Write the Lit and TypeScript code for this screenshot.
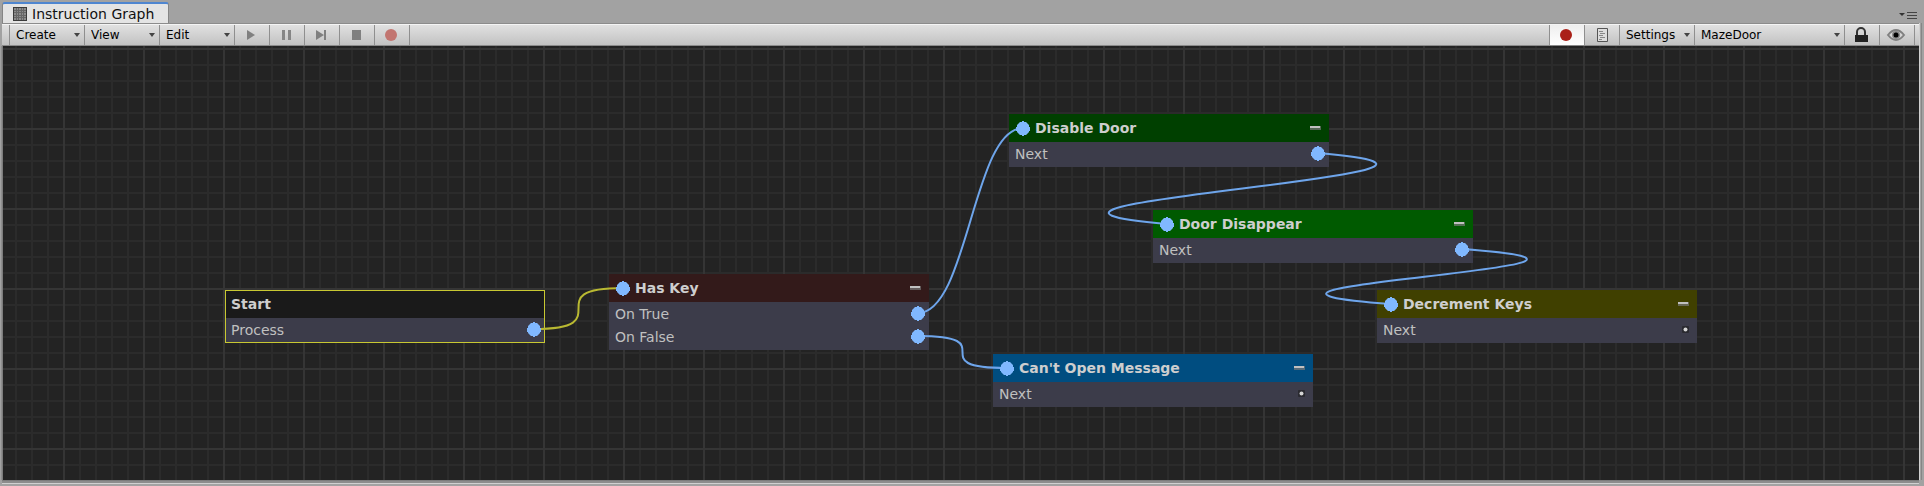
import { LitElement, html, svg, css } from "lit";
import { customElement } from "lit/decorators.js";
import { styleMap } from "lit/directives/style-map.js";

type Output = { label: string; to?: string; color?: string; reach?: number; sag?: number };
type GraphNode = { id: string; title: string; x: number; y: number; color: string; root?: boolean; outputs: Output[] };

const BLUE = "#80b8ff";

const NODES: GraphNode[] = [
  { id: "start", title: "Start", x: 222, y: 244, color: "#1a1a1a", root: true,
    outputs: [{ label: "Process", to: "key", color: "#b9b932", reach: 89 }] },
  { id: "key", title: "Has Key", x: 606, y: 228, color: "#331a1a",
    outputs: [{ label: "On True", to: "disable", reach: 50 }, { label: "On False", to: "message", reach: 89 }] },
  { id: "disable", title: "Disable Door", x: 1006, y: 68, color: "#004000",
    outputs: [{ label: "Next", to: "disappear", reach: 250, sag: 21 }] },
  { id: "disappear", title: "Door Disappear", x: 1150, y: 164, color: "#005a00",
    outputs: [{ label: "Next", to: "decrement", reach: 250, sag: 18 }] },
  { id: "decrement", title: "Decrement Keys", x: 1374, y: 244, color: "#404000", outputs: [{ label: "Next" }] },
  { id: "message", title: "Can't Open Message", x: 990, y: 308, color: "#004d80", outputs: [{ label: "Next" }] },
];

@customElement("graph-node")
export class GraphNodeElement extends LitElement {
  static properties = { node: { attribute: false } };
  declare node: GraphNode;

  static styles = css`
    :host { display: block; width: 320px; font: 14px/22px "DejaVu Sans", sans-serif; color: #c0c0c0; }
    .head { display: flex; align-items: center; height: 28px; padding: 0 8px 0 7px; }
    .title { flex: 1; margin: 0; font-size: 14px; font-weight: bold; color: #cecece; }
    .pin { position: relative; z-index: 1; width: 14px; height: 15px; margin-right: 5px; flex: none; }
    .fold { display: flex; padding: 4px 0; border: 0; background: none; }
    .body { display: flex; flex-direction: column; gap: 1px; margin: 0; padding: 1px 4px 2px 6px; list-style: none; background: #3c3c4a; }
    .row { display: flex; align-items: center; justify-content: space-between; height: 22px; }
    .row .pin { margin: 0 0 2px; }
    .root { outline: 1px solid #c8c832; outline-offset: -1px; }
    .root .head { padding-left: 6px; }
  `;

  private pin() {
    return html`<svg class="pin" viewBox="0 0 14 15"><path fill=${BLUE} d="M6 0h2v1h2l3 3v2h1v4h-1v1l-3 3H8v1H6v-1H4l-3-3v-1H0V6h1V4l3-3h2z"/></svg>`;
  }

  render() {
    const n = this.node;
    return html`<section class=${n.root ? "root" : ""}>
      <header class="head" style=${styleMap({ background: n.color })}>
        ${n.root ? "" : this.pin()}
        <h2 class="title">${n.title}</h2>
        ${n.root ? "" : html`<button class="fold" aria-label="Collapse">
          <svg width="12" height="4"><path fill="#777" opacity=".7" d="M1 0h11v4H1z"/><path fill="#c0c0c0" d="M1 0h10v2H1z"/></svg>
        </button>`}
      </header>
      <ul class="body">
        ${n.outputs.map((o) => html`<li class="row"><span>${o.label}</span>
          ${o.to ? this.pin() : html`<svg class="pin" viewBox="0 0 14 15"><rect x="3" y="4" width="7" height="7" rx="1" fill="#2a2a30"/><circle cx="6.500" cy="7.500" r="2" fill="#d4d4d4"/></svg>`}
        </li>`)}
      </ul>
    </section>`;
  }
}

@customElement("app-root")
export class AppRoot extends LitElement {
  static styles = css`
    :host { display: flex; flex-direction: column; box-sizing: border-box; height: 100vh; padding: 2px 5px 0 2px;
      background: #a2a2a2; font: 14px/20px "DejaVu Sans", sans-serif; color: #111; overflow: hidden; }
    .tabs { display: flex; justify-content: space-between; align-items: stretch; height: 21px; flex: none; }
    .tab { display: flex; align-items: center; gap: 5px; margin: 0; padding: 0 14px 0 10px; border: 1px solid #858585;
      border-width: 0 1px; border-top: 2px solid #4f86d0; border-radius: 3px 3px 0 0; background: #e4e4e4; font: inherit; color: #111; }
    .pane { display: flex; align-items: flex-end; border: 0; background: none; padding: 0 2px 4px 0; }
    .bar { display: flex; height: 21px; flex: none; padding-left: 7px; border-top: 1px solid #8c8c8c; border-bottom: 1px solid #8a8a8a;
      box-shadow: inset 0 1px #f4f4f4, 1px 0 #d0d0d0, 2px 0 #a2a2a2, 3px 0 #868686; background: linear-gradient(#e2e2e2, #c2c2c2); }
    .item { display: flex; align-items: center; justify-content: center; box-sizing: border-box; width: 35px; margin: 1px 0 0; padding: 0 2px 0 0;
      border: 0; border-left: 1px solid #8f8f8f; background: none; }
    .on { background: linear-gradient(#eee, #fff); }
    .menu { position: relative; width: 75px; padding: 0; }
    .wide { width: 150px; }
    .select { appearance: none; width: 100%; height: 20px; padding: 0 0 0 6px; border: 0; background: none; color: #000;
      font: 12px/20px "DejaVu Sans", sans-serif; }
    .arrow { position: absolute; right: 4px; top: 8px; pointer-events: none; }
    .space { flex: 1; border-left: 1px solid #8f8f8f; margin-top: 1px; }
    .end { width: 5px; }
    .canvas { position: relative; flex: 1; margin-left: 1px; overflow: hidden; background: #232323;
      box-shadow: -1px 0 #7c7c7c, -2px 0 #8e8e8e, 1px 0 #d0d0d0, 2px 0 #a2a2a2, 3px 0 #868686; }
    .layer { position: absolute; inset: 0; width: 100%; height: 100%; }
    .placed { position: absolute; }
    .foot { height: 6px; flex: none; background: linear-gradient(#7c7c7c 0 1px, #8c8c8c 1px 3px, #d0d0d0 3px 4px, #a2a2a2 4px); }
  `;

  private menu(label: string, options: string[], wide = false) {
    return html`<div class="item menu ${wide ? "wide" : ""}">
      <select class="select" aria-label=${label}>${options.map((o) => html`<option>${o}</option>`)}</select>
      <svg class="arrow" width="6" height="4"><path fill="#444" d="M0 0h6L3 4z"/></svg>
    </div>`;
  }

  private tool(label: string, icon: unknown, on = false) {
    return html`<button class="item ${on ? "on" : ""}" aria-label=${label}>
      <svg width="20" height="16" viewBox="0 0 20 16">${icon}</svg></button>`;
  }

  private links() {
    return NODES.flatMap((n) => n.outputs.map((o, i) => {
      const target = NODES.find((t) => t.id === o.to);
      if (!target) return "";
      const x1 = n.x + 309, y1 = n.y + 39 + i * 23, x2 = target.x + 14, y2 = target.y + 14;
      const r = o.reach ?? 50, k = o.sag ?? 0;
      return svg`<path d="M${x1} ${y1}C${x1 + r} ${y1 + k} ${x2 - r} ${y2 - k} ${x2} ${y2}" fill="none" stroke=${o.color ?? "#6ea5eb"} stroke-width="2"/>`;
    }));
  }

  render() {
    return html`
      <div class="tabs">
        <button class="tab">
          <svg width="14" height="14"><path fill="#3a3a3a" d="M0 0h14v14H0z"/><path fill="#8c8c8c" d="M1 1h12v12H1z"/>
            <path stroke="#666" d="M3.500 1v12M5.500 1v12M8.500 1v12M10.500 1v12M1 3.500h12M1 5.500h12M1 8.500h12M1 10.500h12"/></svg>
          Instruction Graph
        </button>
        <button class="pane" aria-label="Pane options">
          <svg width="18" height="8"><path fill="#333" d="M0 2h6L3 5z"/><path stroke="#444" d="M8 1.500h10M8 4.500h10M8 7.500h10"/></svg>
        </button>
      </div>
      <div class="bar">
        ${this.menu("Create", ["Create"])}${this.menu("View", ["View"])}${this.menu("Edit", ["Edit"])}
        ${this.tool("Play", svg`<path fill="#808080" d="M6 3l8 5-8 5z"/>`)}
        ${this.tool("Pause", svg`<path fill="#858585" d="M6 3h3v10H6zM12 3h3v10h-3z"/>`)}
        ${this.tool("Step", svg`<path fill="#808080" d="M5 3l8 5-8 5zM13 3h2v10h-2z"/>`)}
        ${this.tool("Stop", svg`<path fill="#808080" d="M6 3h9v10H6z"/>`)}
        ${this.tool("Record", svg`<circle cx="10" cy="8" r="6" fill="#c27570"/>`)}
        <div class="space"></div>
        ${this.tool("Breakpoints", svg`<circle cx="10" cy="8" r="6" fill="#aa2018"/>`, true)}
        ${this.tool("Log", svg`<path fill="#ddd" stroke="#555" d="M6.500 1.500h10v13h-10z"/><path stroke="#888" d="M8 4.500h4M9 6.500h5M8 8.500h4M9 10.500h5M8 12.500h3"/>`)}
        ${this.menu("Settings", ["Settings"])}${this.menu("Graph", ["MazeDoor"], true)}
        ${this.tool("Lock", svg`<path fill="none" stroke="#333" stroke-width="2" d="M6 8V5a4 4 0 0 1 8 0v3"/><path fill="#222" d="M4 8h13v7H4z"/>`)}
        ${this.tool("Watch", svg`<path fill="#d4d4d4" stroke="#808080" stroke-width="2" d="M2 8q8-10 16 0-8 10-16 0z"/><circle cx="10" cy="8" r="4" fill="#888"/><circle cx="10" cy="8" r="2.500" fill="#000"/>`)}
        <div class="item end"></div>
      </div>
      <main class="canvas">
        <svg class="layer">
          <defs>
            <pattern id="grid" x="61" y="3" width="80" height="80" patternUnits="userSpaceOnUse">
              <path stroke="#2b2b2b" stroke-width="2" d="M16 0v80M32 0v80M48 0v80M64 0v80M0 16h80M0 32h80M0 48h80M0 64h80"/>
              <path stroke="#353535" stroke-width="2" d="M0 0v80M80 0v80M0 0h80M0 80h80"/>
            </pattern>
          </defs>
          <rect width="100%" height="100%" fill="url(#grid)"/>
        </svg>
        ${NODES.map((n) => html`<graph-node class="placed" .node=${n} style=${styleMap({ left: n.x + "px", top: n.y + "px" })}></graph-node>`)}
        <svg class="layer">${this.links()}</svg>
      </main>
      <div class="foot"></div>
    `;
  }
}
